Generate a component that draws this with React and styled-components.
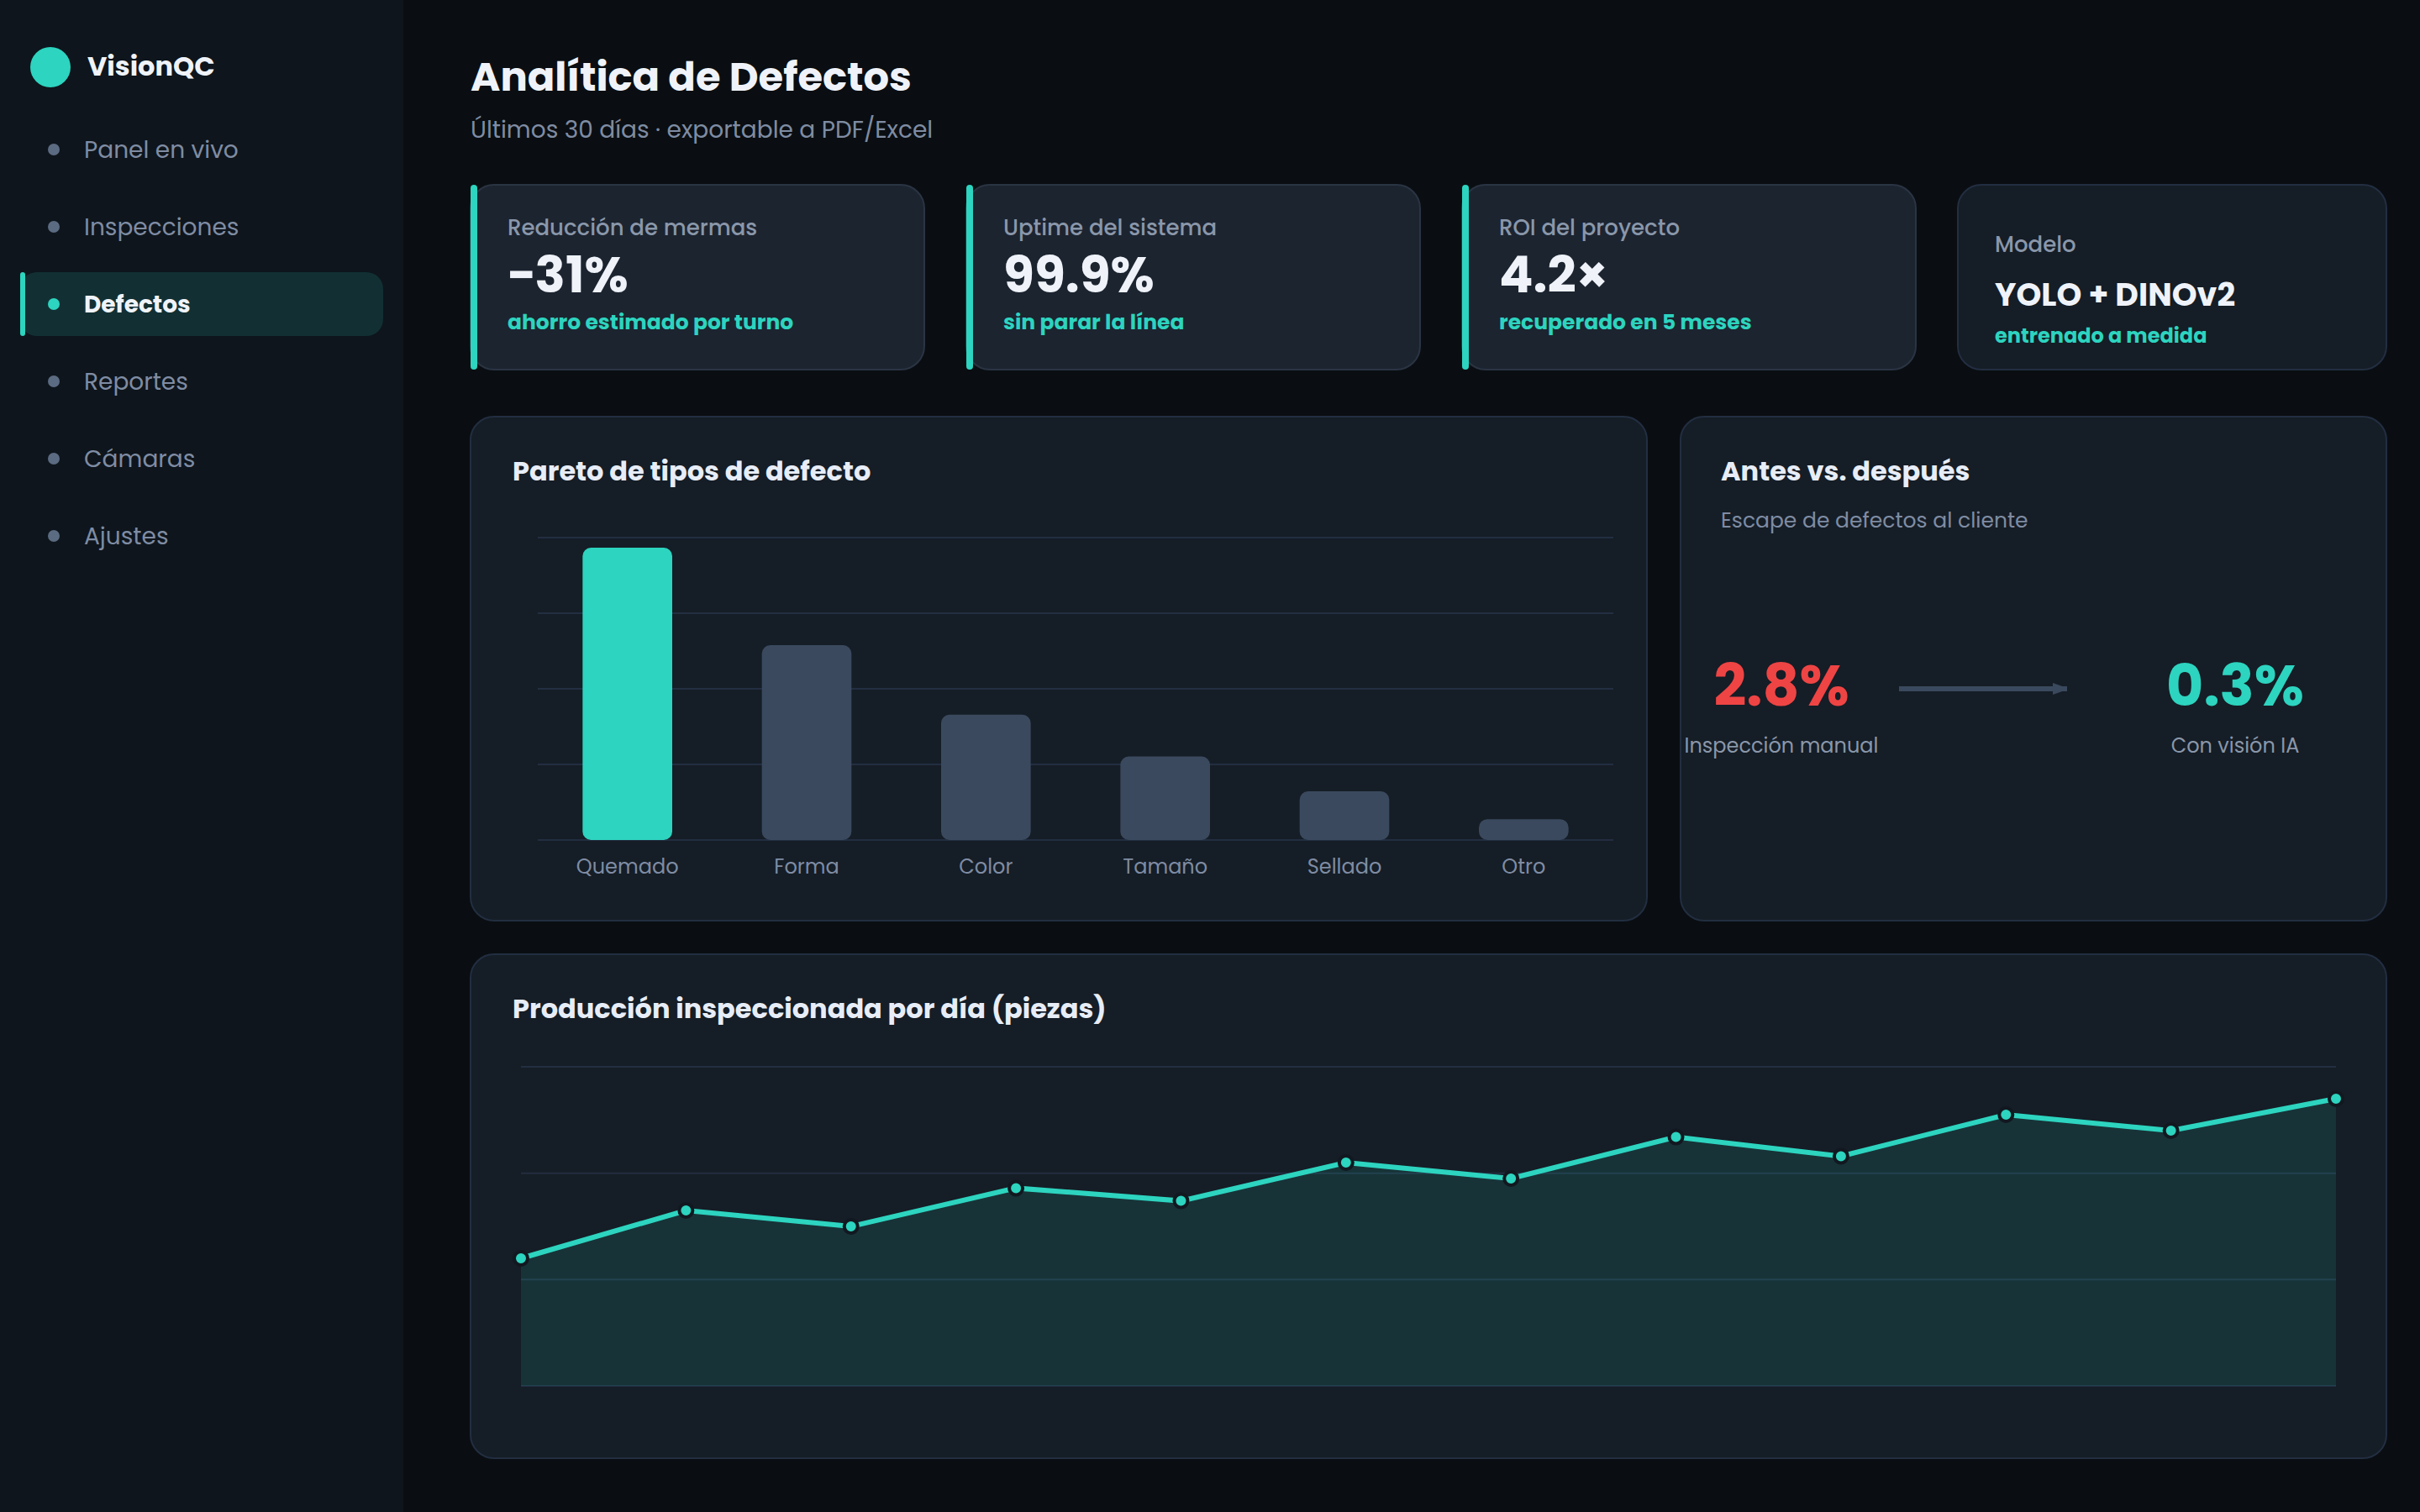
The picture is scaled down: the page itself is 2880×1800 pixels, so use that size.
import React from 'react'
import styled, { createGlobalStyle } from 'styled-components'

const GlobalStyle = createGlobalStyle`
    * {
        box-sizing: border-box;
        margin: 0;
        padding: 0;
    }
    body {
        background: #0a0e12;
        font-family: Poppins, Inter, sans-serif;
        color: #eff3f9;
    }
`

const Page = styled.div`
    display: flex;
    width: 2880px;
    height: 1800px;
    overflow: hidden;
`

const Sidebar = styled.aside`
    width: 480px;
    padding: 56px 24px 0;
    background: #0e151c;
`

const Brand = styled.div`
    display: flex;
    align-items: center;
    gap: 20px;
    height: 48px;
    margin: 0 0 36px 12px;
`

const Logo = styled.span`
    width: 48px;
    height: 48px;
    border-radius: 50%;
    background: #2dd4bf;
`

const BrandName = styled.strong`
    padding-bottom: 3px;
    font-size: 32px;
    line-height: 44px;
    font-weight: 700;
`

const Nav = styled.nav`
    display: flex;
    flex-direction: column;
    gap: 16px;
`

const NavItem = styled.a`
    position: relative;
    display: flex;
    align-items: center;
    gap: 29px;
    width: 432px;
    height: 76px;
    padding-left: 33px;
    border-radius: 20px;
    font-size: 28px;
    line-height: 40px;
    font-weight: ${(p) => (p.$active ? 700 : 400)};
    color: ${(p) => (p.$active ? '#eff3f9' : '#7f8ca3')};
    background: ${(p) => (p.$active ? 'rgba(45, 212, 191, 0.14)' : 'transparent')};
`

const NavText = styled.span`
    padding-top: 2px;
`

const Dot = styled.span`
    width: 14px;
    height: 14px;
    border-radius: 50%;
    background: ${(p) => (p.$active ? '#2dd4bf' : '#5b6b82')};
`

const ActiveBar = styled.span`
    position: absolute;
    left: 0;
    top: 0;
    bottom: 0;
    width: 6px;
    border-radius: 3px;
    background: #2dd4bf;
`

const Main = styled.main`
    flex: 1;
    padding: 62px 39px 0 79px;
`

const Title = styled.h1`
    padding-left: 1px;
    font-size: 48px;
    line-height: 60px;
    font-weight: 700;
`

const Subtitle = styled.p`
    margin-top: 13px;
    padding-left: 1px;
    font-size: 28px;
    line-height: 40px;
    color: #7f8ca3;
`

const Kpis = styled.section`
    display: grid;
    grid-template-columns: 542px 542px 542px 512px;
    gap: 48px;
    margin-top: 44px;
`

const KpiCard = styled.article`
    position: relative;
    height: 222px;
    padding: ${(p) => (p.$plain ? '52px' : '32px')} 43px 0;
    border: 2px solid ${(p) => (p.$plain ? '#222e41' : '#2a3443')};
    border-radius: 29px;
    background: ${(p) => (p.$plain ? '#151d26' : '#1c2430')};
`

const Accent = styled.span`
    position: absolute;
    left: -1px;
    top: -1px;
    bottom: -1px;
    width: 8px;
    border-radius: 4px;
    background: #2dd4bf;
`

const KpiLabel = styled.p`
    font-size: 26px;
    line-height: 36px;
    font-weight: 500;
    color: #8a97aa;
`

const KpiValue = styled.p`
    margin-top: ${(p) => (p.$small ? '19px' : '2px')};
    font-size: ${(p) => (p.$small ? '38px' : '60px')};
    line-height: ${(p) => (p.$small ? '46px' : '72px')};
    font-weight: 700;
`

const KpiNote = styled.p`
    margin-top: ${(p) => (p.$small ? '8px' : '3px')};
    font-size: ${(p) => (p.$small ? '24px' : '25px')};
    line-height: 36px;
    font-weight: 700;
    color: #2dd4bf;
`

const Charts = styled.section`
    display: grid;
    grid-template-columns: 1402px 842px;
    gap: 38px;
    margin-top: 54px;
`

const Panel = styled.article`
    height: 602px;
    padding-top: 42px;
    border: 2px solid #222e41;
    border-radius: 29px;
    background: #151d26;
`

const WidePanel = styled(Panel)`
    margin-top: 38px;
`

const PanelTitle = styled.h2`
    padding-left: ${(p) => (p.$chart ? '49px' : '47px')};
    font-size: 32px;
    line-height: 44px;
    font-weight: 700;
    color: #e7edf7;
`

const PanelText = styled.p`
    margin-top: 19px;
    padding-left: 47px;
    font-size: 25px;
    line-height: 36px;
    color: #7f8ca3;
`

const BarSvg = styled.svg`
    display: block;
    margin: 41px 0 0 79px;
    overflow: visible;
`

const LineSvg = styled.svg`
    display: block;
    margin: 31px 0 0 59px;
    overflow: visible;
`

const BarLabel = styled.text`
    font-size: 24px;
    fill: #7f8ca3;
    text-anchor: middle;
`

const Compare = styled.div`
    display: grid;
    grid-template-columns: 238px 242px 358px;
    justify-items: center;
    margin-top: 139px;
`

const Stat = styled.div`
    text-align: center;
    white-space: nowrap;
`

const StatValue = styled.p`
    font-size: 68px;
    line-height: 80px;
    font-weight: 700;
    color: ${(p) => p.$color};
`

const StatLabel = styled.p`
    margin-top: 14px;
    font-size: 24px;
    line-height: 34px;
    color: #8a97aa;
`

const Arrow = styled.svg`
    display: block;
    margin-top: 36px;
`

const menu = ['Panel en vivo', 'Inspecciones', 'Defectos', 'Reportes', 'Cámaras', 'Ajustes']

const kpis = [
    { label: 'Reducción de mermas', value: '−31%', note: 'ahorro estimado por turno' },
    { label: 'Uptime del sistema', value: '99.9%', note: 'sin parar la línea' },
    { label: 'ROI del proyecto', value: '4.2×', note: 'recuperado en 5 meses' },
    { label: 'Modelo', value: 'YOLO + DINOv2', note: 'entrenado a medida', plain: true },
]

const defects = [
    { name: 'Quemado', value: 42 },
    { name: 'Forma', value: 28 },
    { name: 'Color', value: 18 },
    { name: 'Tamaño', value: 12 },
    { name: 'Sellado', value: 7 },
    { name: 'Otro', value: 3 },
]

const production = [40, 55, 50, 62, 58, 70, 65, 78, 72, 85, 80, 90]

const ParetoChart = () => {
    const base = 376
    const slot = 1280 / defects.length
    return (
        <BarSvg width="1280" height="430">
            {[16, 106, 196, 286, 376].map((y) => (
                <line key={y} x1="0" x2="1280" y1={y} y2={y} stroke="#222e41" strokeWidth="2" />
            ))}
            {defects.map((d, i) => {
                const h = (d.value / 42) * 348
                return (
                    <g key={d.name}>
                        <rect
                            x={slot * i + slot / 4}
                            y={base - h}
                            width={slot / 2}
                            height={h}
                            rx="10"
                            fill={i === 0 ? '#2dd4bf' : '#3a495e'}
                        />
                        <BarLabel x={slot * (i + 0.5)} y="416">{d.name}</BarLabel>
                    </g>
                )
            })}
        </BarSvg>
    )
}

const ProductionChart = () => {
    const step = 2160 / (production.length - 1)
    const points = production.map((v, i) => [i * step, 396 - v * 3.8])
    const line = points.map((p) => p.join(',')).join(' ')
    return (
        <LineSvg width="2160" height="420">
            {[0, 1, 2, 3].map((n) => {
                const y = 16 + (380 / 3) * n
                return <line key={n} x1="0" x2="2160" y1={y} y2={y} stroke="#222e41" strokeWidth="2" />
            })}
            <polygon points={`0,396 ${line} 2160,396`} fill="#2dd4bf" fillOpacity="0.12" />
            <polyline points={line} fill="none" stroke="#2dd4bf" strokeWidth="6" />
            {points.map(([x, y]) => (
                <circle key={x} cx={x} cy={y} r="8" fill="#2dd4bf" stroke="#121820" strokeWidth="4" />
            ))}
        </LineSvg>
    )
}

export default function App() {
    return (
        <Page>
            <GlobalStyle />
            <Sidebar>
                <Brand>
                    <Logo />
                    <BrandName>VisionQC</BrandName>
                </Brand>
                <Nav>
                    {menu.map((item) => {
                        const active = item === 'Defectos'
                        return (
                            <NavItem key={item} $active={active}>
                                {active && <ActiveBar />}
                                <Dot $active={active} />
                                <NavText>{item}</NavText>
                            </NavItem>
                        )
                    })}
                </Nav>
            </Sidebar>
            <Main>
                <Title>Analítica de Defectos</Title>
                <Subtitle>Últimos 30 días · exportable a PDF/Excel</Subtitle>
                <Kpis>
                    {kpis.map((kpi) => (
                        <KpiCard key={kpi.label} $plain={kpi.plain}>
                            {!kpi.plain && <Accent />}
                            <KpiLabel>{kpi.label}</KpiLabel>
                            <KpiValue $small={kpi.plain}>{kpi.value}</KpiValue>
                            <KpiNote $small={kpi.plain}>{kpi.note}</KpiNote>
                        </KpiCard>
                    ))}
                </Kpis>
                <Charts>
                    <Panel>
                        <PanelTitle $chart>Pareto de tipos de defecto</PanelTitle>
                        <ParetoChart />
                    </Panel>
                    <Panel>
                        <PanelTitle>Antes vs. después</PanelTitle>
                        <PanelText>Escape de defectos al cliente</PanelText>
                        <Compare>
                            <Stat>
                                <StatValue $color="#ef4444">2.8%</StatValue>
                                <StatLabel>Inspección manual</StatLabel>
                            </Stat>
                            <Arrow width="200" height="14">
                                <line x1="0" x2="200" y1="7" y2="7" stroke="#3a495e" strokeWidth="6" />
                                <path d="M183 0 L203 7 L183 14 Z" fill="#3a495e" />
                            </Arrow>
                            <Stat>
                                <StatValue $color="#2dd4bf">0.3%</StatValue>
                                <StatLabel>Con visión IA</StatLabel>
                            </Stat>
                        </Compare>
                    </Panel>
                </Charts>
                <WidePanel>
                    <PanelTitle $chart>Producción inspeccionada por día (piezas)</PanelTitle>
                    <ProductionChart />
                </WidePanel>
            </Main>
        </Page>
    )
}
